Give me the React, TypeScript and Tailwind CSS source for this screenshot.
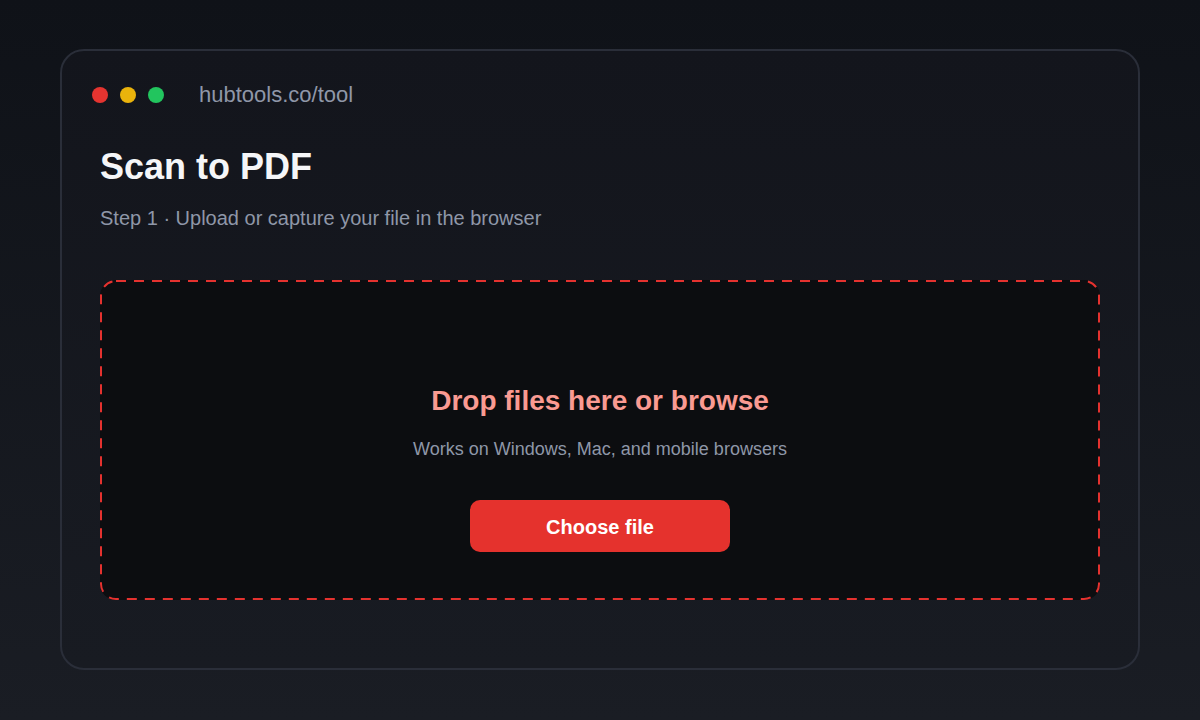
import React from "react";

const font = { fontFamily: '"Liberation Sans", Arial, sans-serif' };

function WindowDots() {
  return (
    <div className="flex items-center gap-3">
      <span className="block h-4 w-4 rounded-full bg-[#e53430]" />
      <span className="block h-4 w-4 rounded-full bg-[#eab30c]" />
      <span className="block h-4 w-4 rounded-full bg-[#22c55e]" />
    </div>
  );
}

function DropZone() {
  return (
    <div className="relative mt-[48px] h-[320px] w-[1000px] rounded-[16px] bg-[#0c0d10]">
      {/* dashed outline drawn on top of the zone */}
      <svg
        className="pointer-events-none absolute inset-0"
        width="1000"
        height="320"
        viewBox="0 0 1000 320"
      >
        <rect
          x="1"
          y="1"
          width="998"
          height="318"
          rx="15"
          ry="15"
          fill="none"
          stroke="#e5322f"
          strokeWidth="2"
          strokeDasharray="10 8"
        />
      </svg>
      <div className="flex flex-col items-center pt-[103px]">
        <div className="text-[28px] font-bold leading-[36px] text-[#fa9a92]">
          Drop files here or browse
        </div>
        <div className="mt-4 text-[18px] leading-[28px] text-[#8f97a8]">
          Works on Windows, Mac, and mobile browsers
        </div>
        <button className="mt-[37px] flex h-[52px] w-[260px] items-center justify-center rounded-[10px] bg-[#e5322d] pt-[2px] text-[20px] font-bold text-white">
          Choose file
        </button>
      </div>
    </div>
  );
}

export default function App() {
  return (
    <div
      className="h-[720px] w-[1200px] overflow-hidden bg-gradient-to-b from-[#0f1218] to-[#1a1d24] pt-[49px]"
      style={font}
    >
      <div className="mx-[60px] h-[621px] rounded-[24px] border-2 border-[#2a2e39] bg-gradient-to-b from-[#13151c] to-[#181b22]">
        <div className="mt-[32px] flex h-6 items-center pl-[30px]">
          <WindowDots />
          <span className="ml-[35px] text-[22px] leading-6 text-[#8f97a8]">
            hubtools.co/tool
          </span>
        </div>
        <div className="px-[38px]">
          <h1 className="mt-10 text-[36px] font-bold leading-[40px] text-[#f5f6f8]">
            Scan to PDF
          </h1>
          <p className="mt-[17px] text-[20px] leading-[28px] text-[#8f97a8]">
            Step 1 · Upload or capture your file in the browser
          </p>
          <DropZone />
        </div>
      </div>
    </div>
  );
}
